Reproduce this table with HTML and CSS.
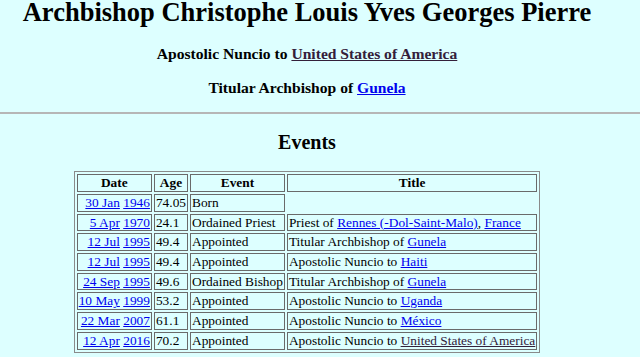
FILE: index.html
```html
<!DOCTYPE html>
<html>
<head>
<meta charset="utf-8">
<title>Archbishop Christophe Louis Yves Georges Pierre</title>
<link rel="stylesheet" href="styles.css">
</head>
<body>
<header class="col">
  <h1 class="name">Archbishop Christophe Louis Yves Georges Pierre</h1>
  <h3 class="role">Apostolic Nuncio to <a class="visited" href="#">United States of America</a></h3>
  <h3 class="role">Titular Archbishop of <a href="#">Gunela</a></h3>
</header>
<hr class="rule">
<section class="col">
  <h2 class="section-title">Events</h2>
  <table class="events">
    <tr>
      <th>Date</th><th>Age</th><th>Event</th><th>Title</th>
    </tr>
    <tr>
      <td class="date"><a href="#">30 Jan</a> <a href="#">1946</a></td>
      <td>74.05</td><td>Born</td>
    </tr>
    <tr>
      <td class="date"><a href="#">5 Apr</a> <a href="#">1970</a></td>
      <td>24.1</td><td>Ordained Priest</td>
      <td>Priest of <a href="#">Rennes (-Dol-Saint-Malo)</a>, <a href="#">France</a></td>
    </tr>
    <tr>
      <td class="date"><a href="#">12 Jul</a> <a href="#">1995</a></td>
      <td>49.4</td><td>Appointed</td>
      <td>Titular Archbishop of <a href="#">Gunela</a></td>
    </tr>
    <tr>
      <td class="date"><a href="#">12 Jul</a> <a href="#">1995</a></td>
      <td>49.4</td><td>Appointed</td>
      <td>Apostolic Nuncio to <a href="#">Haiti</a></td>
    </tr>
    <tr>
      <td class="date"><a href="#">24 Sep</a> <a href="#">1995</a></td>
      <td>49.6</td><td>Ordained Bishop</td>
      <td>Titular Archbishop of <a href="#">Gunela</a></td>
    </tr>
    <tr>
      <td class="date"><a href="#">10 May</a> <a href="#">1999</a></td>
      <td>53.2</td><td>Appointed</td>
      <td>Apostolic Nuncio to <a href="#">Uganda</a></td>
    </tr>
    <tr>
      <td class="date"><a href="#">22 Mar</a> <a href="#">2007</a></td>
      <td>61.1</td><td>Appointed</td>
      <td>Apostolic Nuncio to <a href="#">México</a></td>
    </tr>
    <tr>
      <td class="date"><a href="#">12 Apr</a> <a href="#">2016</a></td>
      <td>70.2</td><td>Appointed</td>
      <td>Apostolic Nuncio to <a class="visited" href="#">United States of America</a></td>
    </tr>
  </table>
</section>
</body>
</html>
```
FILE: styles.css
```css
html, body {
  margin: 0;
  padding: 0;
  background: #ddffff;
}
body {
  font-family: "Liberation Serif", "Times New Roman", serif;
  font-size: 13.36px;
  color: #000;
}
a {
  color: #0000ee;
}
a.visited {
  color: #33203a;
}
.col {
  width: 614px;
  text-align: center;
}
.name {
  font-size: 26.5px;
  line-height: 24px;
  font-weight: bold;
  margin: 0 0 21px;
}
.role {
  font-size: 15.6px;
  font-weight: bold;
  margin: 15.6px 0;
}
.rule {
  margin: 0;
  height: 0;
  border: 0;
  border-top: 2px solid #b6b6b6;
}
.section-title {
  font-size: 20px;
  font-weight: bold;
  margin: 17px 0 17px;
}
.events {
  margin: 0 auto;
  border: 1px solid #8a8a8a;
  border-spacing: 2px;
  text-align: left;
}
.events th,
.events td {
  border: 1px solid #6a6a6a;
  padding: 0 1px;
  line-height: 15.7px;
  white-space: nowrap;
}
.events th {
  font-weight: bold;
  text-align: center;
}
.events td.date {
  text-align: right;
}
```
